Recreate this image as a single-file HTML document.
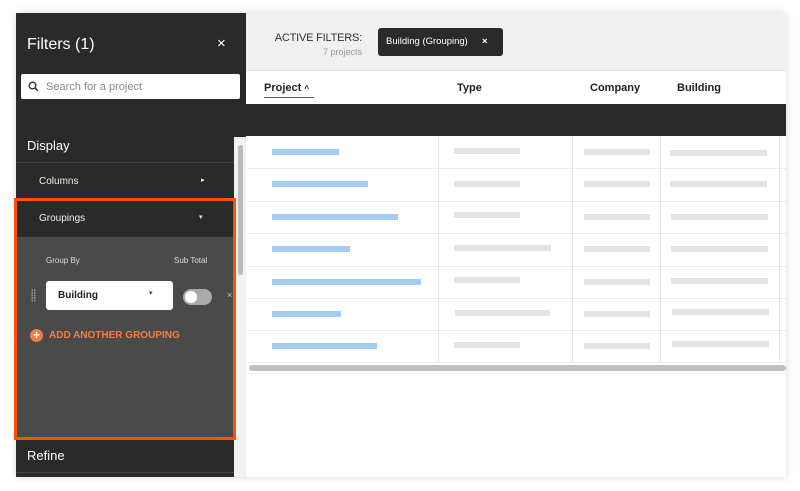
<!DOCTYPE html>
<html><head><meta charset="utf-8"><style>
*{box-sizing:border-box;margin:0;padding:0}
body{width:800px;height:491px;background:#fff;font-family:"Liberation Sans",sans-serif;position:relative;overflow:hidden}
.a{position:absolute}
.panel{left:16px;top:13px;width:770px;height:464px;background:#fff;box-shadow:0 0 8px rgba(0,0,0,.15)}
.bb{position:absolute;height:6px;background:#a3cbf6}
.gb{position:absolute;height:6px;background:#e3e3e3}
.vl{position:absolute;width:1px;background:#e6e6e6;top:136px;height:227px}
.hl{position:absolute;left:247px;width:539px;height:1px;background:#ececec}
</style></head><body>
<div class="a panel"></div>
<div class="a" style="left:246px;top:13px;width:540px;height:58px;background:#f0f0f0;border-bottom:1px solid #e2e2e2"></div>
<div class="a" style="left:262px;top:32px;width:100px;text-align:right;font-size:11px;color:#333;letter-spacing:-0.2px">ACTIVE FILTERS:</div>
<div class="a" style="left:262px;top:47px;width:100px;text-align:right;font-size:9px;color:#999">7 projects</div>
<div class="a" style="left:378px;top:28px;width:125px;height:28px;background:#2a2a2a;border-radius:3px;color:#fff;font-size:9.5px;line-height:28px;padding-left:8px">Building (Grouping)<span style="position:absolute;left:104px;font-weight:bold">×</span></div>
<div class="a" style="left:264px;top:82px;font-size:11px;font-weight:bold;color:#222">Project <span style="font-size:8px">^</span></div>
<div class="a" style="left:264px;top:97px;width:50px;height:1px;background:#555"></div>
<div class="a" style="left:457px;top:82px;font-size:11px;font-weight:bold;color:#222">Type</div>
<div class="a" style="left:590px;top:82px;font-size:11px;font-weight:bold;color:#222">Company</div>
<div class="a" style="left:677px;top:82px;font-size:11px;font-weight:bold;color:#222">Building</div>
<div class="a" style="left:246px;top:104px;width:540px;height:32px;background:#2a2a2a"></div>
<div class="hl" style="top:168px"></div><div class="hl" style="top:201px"></div><div class="hl" style="top:233px"></div><div class="hl" style="top:266px"></div><div class="hl" style="top:298px"></div><div class="hl" style="top:330px"></div><div class="hl" style="top:362px"></div>
<div class="vl" style="left:438px"></div><div class="vl" style="left:572px"></div><div class="vl" style="left:660px"></div><div class="vl" style="left:779px"></div>
<div class="bb" style="left:272px;top:149px;width:67px"></div>
<div class="bb" style="left:272px;top:181px;width:96px"></div>
<div class="bb" style="left:272px;top:214px;width:126px"></div>
<div class="bb" style="left:272px;top:246px;width:78px"></div>
<div class="bb" style="left:272px;top:279px;width:149px"></div>
<div class="bb" style="left:272px;top:311px;width:69px"></div>
<div class="bb" style="left:272px;top:343px;width:105px"></div>
<div class="gb" style="left:454px;top:148px;width:66px"></div><div class="gb" style="left:584px;top:149px;width:66px"></div><div class="gb" style="left:670px;top:150px;width:97px"></div>
<div class="gb" style="left:454px;top:181px;width:66px"></div><div class="gb" style="left:584px;top:181px;width:66px"></div><div class="gb" style="left:670px;top:181px;width:97px"></div>
<div class="gb" style="left:454px;top:212px;width:66px"></div><div class="gb" style="left:584px;top:214px;width:66px"></div><div class="gb" style="left:671px;top:214px;width:97px"></div>
<div class="gb" style="left:454px;top:245px;width:97px"></div><div class="gb" style="left:584px;top:246px;width:66px"></div><div class="gb" style="left:671px;top:246px;width:97px"></div>
<div class="gb" style="left:454px;top:277px;width:66px"></div><div class="gb" style="left:584px;top:279px;width:66px"></div><div class="gb" style="left:671px;top:278px;width:97px"></div>
<div class="gb" style="left:455px;top:310px;width:95px"></div><div class="gb" style="left:584px;top:311px;width:66px"></div><div class="gb" style="left:672px;top:309px;width:97px"></div>
<div class="gb" style="left:454px;top:342px;width:66px"></div><div class="gb" style="left:584px;top:343px;width:66px"></div><div class="gb" style="left:672px;top:341px;width:97px"></div>
<div class="a" style="left:249px;top:365px;width:537px;height:6px;background:#c0c0c0;border-radius:3px"></div>
<div class="a" style="left:247px;top:373px;width:539px;height:1px;background:#eee"></div>
<div class="a" style="left:16px;top:13px;width:230px;height:124px;background:#2a2a2a"></div>
<div class="a" style="left:16px;top:137px;width:218px;height:340px;background:#2a2a2a"></div>
<div class="a" style="left:234px;top:137px;width:12px;height:340px;background:#f2f2f2"></div>
<div class="a" style="left:238px;top:145px;width:5px;height:130px;background:#bbb;border-radius:3px"></div>
<div class="a" style="left:27px;top:36px;font-size:16px;color:#fff">Filters (1)</div>
<div class="a" style="left:217px;top:35px;font-size:15px;color:#fff">×</div>
<div class="a" style="left:21px;top:74px;width:219px;height:25px;background:#fff;border-radius:2px"></div>
<svg class="a" style="left:28px;top:81px" width="11" height="11" viewBox="0 0 11 11"><circle cx="4.5" cy="4.5" r="3.3" fill="none" stroke="#333" stroke-width="1.4"/><path d="M7 7l3 3" stroke="#333" stroke-width="1.5"/></svg>
<div class="a" style="left:46px;top:81px;font-size:11px;color:#888">Search for a project</div>
<div class="a" style="left:27px;top:138px;font-size:13px;color:#fff">Display</div>
<div class="a" style="left:16px;top:162px;width:218px;height:1px;background:#444"></div>
<div class="a" style="left:39px;top:176px;font-size:10px;color:#eee">Columns</div>
<div class="a" style="left:201px;top:176px;font-size:7px;color:#fff">▸</div>
<div class="a" style="left:16px;top:237px;width:218px;height:201px;background:#4a4a4a"></div>
<div class="a" style="left:39px;top:213px;font-size:10px;color:#eee">Groupings</div>
<div class="a" style="left:199px;top:213px;font-size:7px;color:#fff">▾</div>
<div class="a" style="left:46px;top:256px;font-size:8px;color:#ddd">Group By</div>
<div class="a" style="left:174px;top:256px;font-size:8px;color:#ddd">Sub Total</div>
<div class="a" style="left:31px;top:289px;width:5px;height:13px;background:radial-gradient(circle,#999 0.8px,transparent 1px) 0 0/2.5px 2.6px"></div>
<div class="a" style="left:46px;top:281px;width:127px;height:29px;background:#fff;border-radius:3px"></div>
<div class="a" style="left:58px;top:290px;font-size:10px;font-weight:bold;color:#222">Building</div>
<div class="a" style="left:149px;top:289px;font-size:7px;color:#444">▾</div>
<div class="a" style="left:183px;top:289px;width:29px;height:16px;background:#aaa;border-radius:8px"></div>
<div class="a" style="left:185px;top:291px;width:12px;height:12px;background:#fff;border-radius:50%"></div>
<div class="a" style="left:227px;top:290px;font-size:9px;color:#ccc">×</div>
<div class="a" style="left:30px;top:329px;width:13px;height:13px;background:#f47e42;border-radius:50%;color:#fff;font-size:12px;line-height:13px;text-align:center;font-weight:bold">+</div>
<div class="a" style="left:49px;top:330px;font-size:10px;font-weight:bold;color:#f47e42">ADD ANOTHER GROUPING</div>
<div class="a" style="left:14px;top:198px;width:222px;height:242px;border:3px solid #ff5200"></div>
<div class="a" style="left:27px;top:448px;font-size:13px;color:#fff">Refine</div>
<div class="a" style="left:16px;top:472px;width:218px;height:1px;background:#444"></div>
</body></html>
